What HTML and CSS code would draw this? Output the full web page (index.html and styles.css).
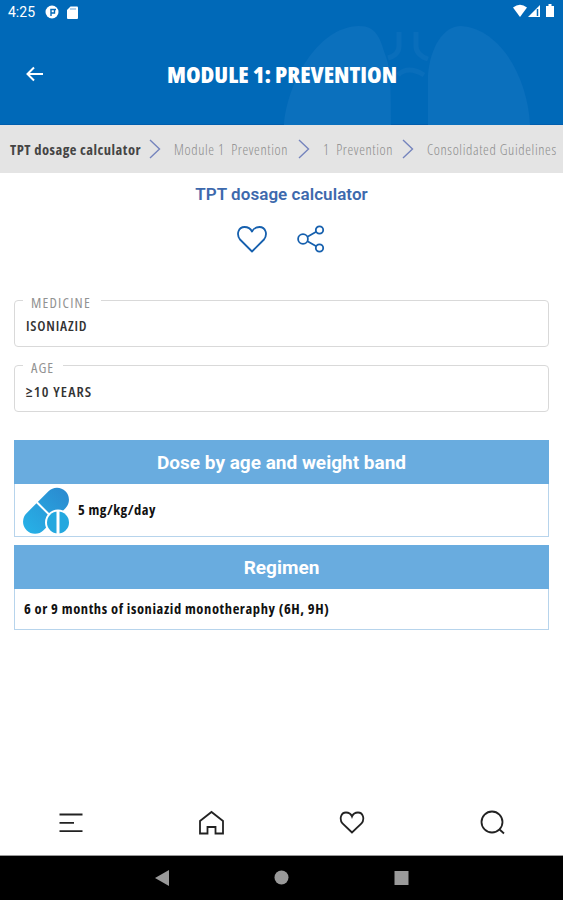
FILE: index.html
```html
<!DOCTYPE html>
<html lang="en">
<head>
<meta charset="utf-8">
<title>TPT dosage calculator</title>
<link rel="stylesheet" href="styles.css">
</head>
<body>
<header class="header">
  <svg class="lungs" width="282" height="125" viewBox="281 0 282 125" aria-hidden="true">
    <g fill="#0b70bd"><path d="M284 125C287 85 316 27 359 26C377 26 380 39 385 54C390 67 391 79 391 125Z"/><path d="M428 125V75C430 48 443 26 461 26C502 29 528 80 530 125Z"/></g>
    <path d="M399 32V46Q399 55 388 58M416 32V46Q416 55 428 59M398 75Q408 65 424 75" fill="none" stroke="#096ebb" stroke-width="5"/>
  </svg>
  <div class="status">
    <span class="clock">4:25</span>
    <svg class="app-mark" width="14" height="14" viewBox="0 0 14 14"><circle cx="7" cy="7" r="6.500" fill="#fff"/><path d="M6 11V4.500M5.200 4.500H11M6.500 8H9.500V5" fill="none" stroke="#0069b8" stroke-width="1.400"/></svg>
    <svg class="sd" width="11" height="13" viewBox="0 0 11 13"><path d="M3.500.5H10a1 1 0 0 1 1 1V12a1 1 0 0 1-1 1H1a1 1 0 0 1-1-1V4Z" fill="#fff"/><path d="M4 2v2M6 2v2M8 2v2" stroke="#69a5d7"/></svg>
    <svg class="signals" width="44" height="14" viewBox="0 0 44 14"><g fill="#fff"><path d="M1 3.500Q8-2 15 3.500L8 13Z"/><path d="M16 13L28 1V13Z"/><path d="M34 2h2.500V0h3v2H42v11h-8Z"/></g><path d="M25.500 5v7" stroke="#0069b8" stroke-width="1.500"/></svg>
  </div>
  <div class="titlebar">
    <svg width="18" height="16" viewBox="0 0 18 16"><path d="M17 8H2M8 1.500L1.500 8L8 14.500" fill="none" stroke="#fff" stroke-width="2"/></svg>
    <h1><span class="cond title-text">MODULE 1: PREVENTION</span></h1>
  </div>
</header>
<nav class="crumbs">
  <span class="cond crumb current">TPT dosage calculator</span>
  <svg class="chev" width="12" height="20" viewBox="0 0 12 20"><path d="M1 1L10.500 10L1 19"/></svg>
  <span class="cond crumb module">Module 1&nbsp; Prevention</span>
  <svg class="chev" width="12" height="20" viewBox="0 0 12 20"><path d="M1 1L10.500 10L1 19"/></svg>
  <span class="cond crumb section">1&nbsp; Prevention</span>
  <svg class="chev" width="12" height="20" viewBox="0 0 12 20"><path d="M1 1L10.500 10L1 19"/></svg>
  <span class="cond crumb guide">Consolidated Guidelines</span>
</nav>
<main>
  <h2>TPT dosage calculator</h2>
  <div class="actions">
    <svg width="32" height="28" viewBox="0 0 32 28"><path d="M16 26.500L4 14.500C0 9 2.500 2 8.500 2C12 2 14.500 3.500 16 6.500C17.500 3.500 20 2 23.500 2C29.500 2 32 9 28 14.500Z"/></svg>
    <svg width="28" height="28" viewBox="0 0 28 28"><circle cx="6" cy="14" r="4.900"/><circle cx="22.500" cy="5" r="3.700"/><circle cx="22.500" cy="23" r="3.700"/><path d="M10.500 11.800L19.200 6.800M10.500 16.200L19.200 21.200"/></svg>
  </div>
  <fieldset class="field"><legend class="medicine-label"><span class="cond">MEDICINE</span></legend><span class="cond medicine">ISONIAZID</span></fieldset>
  <fieldset class="field"><legend class="age-label"><span class="cond">AGE</span></legend><span class="cond age">≥10 YEARS</span></fieldset>
  <section class="card dose">
    <h3 class="dose-head">Dose by age and weight band</h3>
    <div class="card-body">
      <svg class="pills" width="48" height="48" viewBox="0 0 48 48">
        <defs><linearGradient id="pill" x1="1" y1="0" x2="0" y2="0"><stop stop-color="#2b8bd0"/><stop offset="1" stop-color="#27b0e6"/></linearGradient></defs>
        <g transform="rotate(-45 24 23)"><rect x="-4" y="11.500" width="55" height="24" rx="12" fill="url(#pill)"/><path d="M23 10v28" stroke="#fff" stroke-width="2"/></g>
        <circle cx="36" cy="35.500" r="13" fill="#fff"/><circle cx="36" cy="35.500" r="11" fill="#24a8df"/><path d="M36 24v24" stroke="#fff" stroke-width="3"/>
      </svg>
      <span class="cond dose-text">5 mg/kg/day</span>
    </div>
  </section>
  <section class="card regimen">
    <h3 class="regimen-head">Regimen</h3>
    <div class="card-body"><span class="cond regimen-text">6 or 9 months of isoniazid monotheraphy (6H, 9H)</span></div>
  </section>
</main>
<nav class="tabs">
  <svg width="26" height="26" viewBox="0 0 26 26"><path d="M2.500 4.500H25.500M2.500 12.800H17M2.500 21.200H25.500"/></svg>
  <svg width="26" height="26" viewBox="0 0 26 26"><path d="M2 23.500V11L13.500 2L25 11V23.500H17.500V17H9.500V23.500Z"/></svg>
  <svg width="26" height="26" viewBox="0 0 26 26"><path d="M13 22.500L3.500 13.500C0 9 2 2.500 7 2.500C10 2.500 12 4 13 6.500C14 4 16 2.500 19 2.500C24 2.500 26 9 22.500 13.500Z"/></svg>
  <svg width="26" height="26" viewBox="0 0 26 26"><circle cx="12" cy="12" r="10.500"/><path d="M19 19L24 23.500"/></svg>
</nav>
<footer class="system">
  <svg width="16" height="16" viewBox="0 0 16 16"><path d="M1 8L15 0V16Z"/></svg>
  <svg width="16" height="16" viewBox="0 0 16 16"><circle cx="7.500" cy="7.500" r="7"/></svg>
  <svg width="16" height="16" viewBox="0 0 16 16"><path d="M.5 1h14v14H.5Z"/></svg>
</footer>
</body>
</html>
```
FILE: styles.css
```css
* { box-sizing: border-box; }
body { margin: 0; width: 563px; height: 900px; overflow: hidden; display: flex; flex-direction: column; background: #fff; font-family: Roboto, "Liberation Sans", sans-serif; }
h1, h2, h3 { margin: 0; }
svg { display: block; flex: none; }
.cond { display: block; white-space: nowrap; font-family: "Open Sans", "Noto Sans", sans-serif; font-stretch: 75%; }
.header { height: 125px; flex: none; position: relative; background: #0069b8; color: #fff; border-bottom: 1px solid #005eae; }
.lungs { position: absolute; right: 0; top: 0; }
.status { position: relative; display: flex; height: 24px; padding: 0 7px 0 8px; align-items: center; }
.clock { width: 37px; font-size: 14px; }
.sd { margin-left: 8px; }
.signals { margin-left: auto; margin-bottom: 2px; }
.titlebar { position: relative; height: 99px; display: flex; align-items: center; padding-left: 26px; }
.titlebar h1 { margin-left: 123px; font-size: 23.5px; line-height: 32px; font-weight: 800; }
.title-text { width: 229px; }
.crumbs { height: 48px; flex: none; background: #e4e4e4; display: flex; align-items: center; padding: 0 0 0 10px; }
.crumb { flex: none; font-size: 14.5px; font-weight: 300; color: #8c8c8c; letter-spacing: .63px; }
.current { width: 139px; color: #444; font-weight: 700; letter-spacing: .5px; }
.module { width: 124px; margin-left: 13px; }
.section { width: 79px; margin-left: 13px; }
.guide { margin-left: 13px; }
.chev { fill: none; stroke: #7584bd; stroke-width: 1.4; }
main { flex: 1; padding: 0 14px; }
h2 { margin-top: 10px; line-height: 22px; font-size: 17px; font-weight: 600; text-align: center; color: #3d69ad; letter-spacing: .06px; }
.actions { display: flex; justify-content: center; gap: 29px; margin: 20px 2px 0 0; height: 28px; }
.actions svg { fill: none; stroke: #1660ae; stroke-width: 1.8; stroke-linejoin: round; }
.field { margin: 37px 0 0; height: 57px; border: 1.5px solid #d9d9d9; border-radius: 4px; padding: 6px 0 0 11px; color: #333; font-size: 14px; line-height: 20px; font-weight: 600; }
.field + .field { margin-top: 8px; }
.field legend { height: 20px; margin-left: -3px; padding: 3px 8px 0; color: #929292; font-weight: 500; font-size: 14.5px; }
.medicine-label { width: 78px; letter-spacing: 1.2px; }
.age-label { width: 40px; letter-spacing: 1px; }
.medicine { font-size: 14.5px; letter-spacing: .8px; }
.age { font-size: 15px; letter-spacing: 1.1px; }
.card { border: 1px solid #b7d4ec; }
.card h3 { height: 44px; margin: -1px -1px 0; background: #69acdf; color: #fff; text-align: center; font-weight: 700; font-size: 19px; line-height: 45px; }
.card-body { display: flex; align-items: center; color: #111; font-weight: 700; font-size: 14.5px; padding-left: 7px; }
.dose { margin-top: 28px; height: 97px; }
.dose .card-body { height: 53px; }
.dose-text { margin: 0 0 2px 8px; letter-spacing: .5px; }
.regimen { margin-top: 8px; height: 85px; }
.regimen .card-body { height: 39px; padding-left: 9px; }
.regimen-text { letter-spacing: .6px; }
.tabs { flex: none; height: 66px; display: flex; justify-content: space-around; align-items: center; border-bottom: 1px solid #999; }
.tabs svg { fill: none; stroke: #222; stroke-width: 1.8; }
.system { flex: none; height: 44px; background: #000; display: flex; justify-content: center; align-items: center; gap: 104px; }
.system svg { fill: #999; }
```
